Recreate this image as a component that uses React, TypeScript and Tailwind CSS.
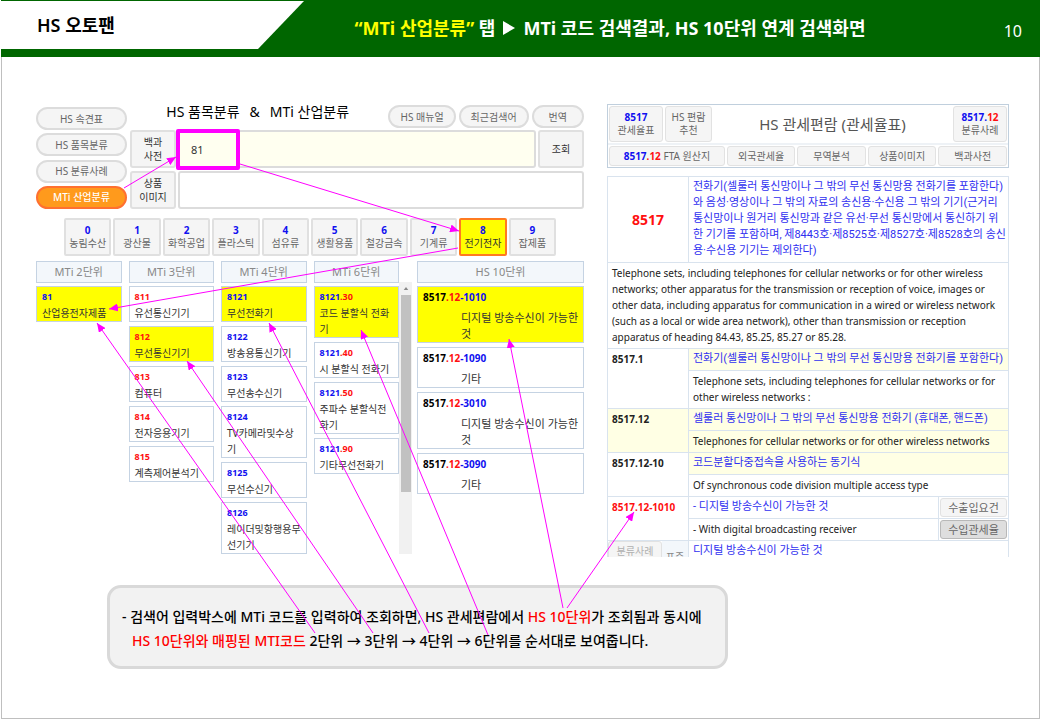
import type { ReactNode } from "react";

type Part = { text: string; tone: "blue" | "red" | "black" };
type Item = { code: Part[]; name: ReactNode; active?: boolean };

const toneClass = {
  blue: "text-[#1010f0]",
  red: "text-[#ff1010]",
  black: "text-black",
};

const blue = (text: string): Part[] => [{ text, tone: "blue" }];
const red = (text: string): Part[] => [{ text, tone: "red" }];
const six = (tail: string): Part[] => [
  { text: "8121", tone: "blue" },
  { text: tail, tone: "red" },
];
const ten = (tail: string): Part[] => [
  { text: "8517", tone: "black" },
  { text: ".12", tone: "red" },
  { text: tail, tone: "blue" },
];

const categories = [
  "농림수산",
  "광산물",
  "화학공업",
  "플라스틱",
  "섬유류",
  "생활용품",
  "철강금속",
  "기계류",
  "전기전자",
  "잡제품",
];

const mtiColumns: { title: string; items: Item[] }[] = [
  {
    title: "MTi 2단위",
    items: [{ code: blue("81"), name: "산업용전자제품", active: true }],
  },
  {
    title: "MTi 3단위",
    items: [
      { code: red("811"), name: "유선통신기기" },
      { code: red("812"), name: "무선통신기기", active: true },
      { code: red("813"), name: "컴퓨터" },
      { code: red("814"), name: "전자응용기기" },
      { code: red("815"), name: "계측제어분석기" },
    ],
  },
  {
    title: "MTi 4단위",
    items: [
      { code: blue("8121"), name: "무선전화기", active: true },
      { code: blue("8122"), name: "방송용통신기기" },
      { code: blue("8123"), name: "무선송수신기" },
      { code: blue("8124"), name: <>TV카메라및수상<br />기</> },
      { code: blue("8125"), name: "무선수신기" },
      { code: blue("8126"), name: <>레이더및항행용무<br />선기기</> },
    ],
  },
  {
    title: "MTi 6단위",
    items: [
      { code: six(".30"), name: <>코드 분할식 전화<br />기</>, active: true },
      { code: six(".40"), name: "시 분할식 전화기" },
      { code: six(".50"), name: <>주파수 분할식전<br />화기</> },
      { code: six(".90"), name: "기타무선전화기" },
    ],
  },
];

const hsItems: Item[] = [
  { code: ten("-1010"), name: <>디지털 방송수신이 가능한<br />것</>, active: true },
  { code: ten("-1090"), name: "기타" },
  { code: ten("-3010"), name: <>디지털 방송수신이 가능한<br />것</> },
  { code: ten("-3090"), name: "기타" },
];

const arrows = [
  [124, 188, 176, 157],
  [240, 164, 459, 231],
  [458, 248, 109, 309],
  [315, 633, 97, 323],
  [373, 633, 187, 361],
  [429, 633, 269, 323],
  [488, 635, 361, 330],
  [563, 608, 509, 339],
  [567, 608, 634, 512],
];

function Code({ parts }: { parts: Part[] }) {
  return (
    <>
      {parts.map((p) => (
        <span key={p.text} className={toneClass[p.tone]}>
          {p.text}
        </span>
      ))}
    </>
  );
}

function Pill({ children, active }: { children: ReactNode; active?: boolean }) {
  return (
    <button
      type="button"
      className={`h-[23px] whitespace-nowrap rounded-full border-2 px-[10px] text-[10px] leading-[18px] ${
        active
          ? "border-[#ff7030] bg-[#ff9a1c] font-medium text-white"
          : "border-[#dcdcdc] bg-[#f5f5f5] text-[#666]"
      }`}
    >
      {children}
    </button>
  );
}

function SquareButton({ children, className }: { children: ReactNode; className: string }) {
  return (
    <button
      type="button"
      className={`rounded-[3px] border border-[#e2e2e2] bg-[#f5f5f5] ${className}`}
    >
      {children}
    </button>
  );
}

function ColumnTitle({ children }: { children: ReactNode }) {
  return (
    <h3 className="h-[22px] whitespace-nowrap border border-[#c5d3e3] bg-[#f3f7fb] text-center text-[11px] leading-5 text-[#888]">
      {children}
    </h3>
  );
}

function Header() {
  return (
    <header className="flex h-[57px] items-start bg-[#006600] text-white">
      <div className="mt-px h-12 w-[303px] shrink-0 bg-white pl-9 [clip-path:polygon(0_0,100%_0,257px_100%,0_100%)]">
        <h1 className="text-[18px] font-semibold leading-[48px] text-black">HS 오토팬</h1>
      </div>
      <h2 className="flex flex-1 items-center justify-center gap-2 whitespace-nowrap text-[18px] font-bold leading-[56px]">
        <span>
          <span className="text-[#ffff00]">“MTi 산업분류”</span> 탭
        </span>
        <svg viewBox="0 0 12 14" className="h-[14px] w-3" fill="currentColor" aria-hidden="true">
          <path d="M0 0L12 7L0 14Z" />
        </svg>
        <span>MTi 코드 검색결과, HS 10단위 연계 검색화면</span>
      </h2>
      <span className="w-[124px] shrink-0 pr-[18px] text-right text-[16px] leading-[62px]">10</span>
    </header>
  );
}

function SearchArea() {
  return (
    <div className="flex gap-[3px]">
      <nav className="flex w-[91px] shrink-0 flex-col justify-between pt-[3px]">
        <Pill>HS 속견표</Pill>
        <Pill>HS 품목분류</Pill>
        <Pill>HS 분류사례</Pill>
        <Pill active>MTi 산업분류</Pill>
      </nav>
      <div className="min-w-0 flex-1">
        <div className="flex h-[26px] items-start gap-[3px] pt-px">
          <h2 className="flex flex-1 justify-center gap-[10px] text-[14px] leading-[14px] text-black">
            <span>HS 품목분류</span>
            <span>&amp;</span>
            <span>MTi 산업분류</span>
          </h2>
          <Pill>HS 매뉴얼</Pill>
          <Pill>최근검색어</Pill>
          <Pill>
            <span className="px-[5px]">번역</span>
          </Pill>
        </div>
        <div className="flex h-[38px] gap-[2px]">
          <label
            htmlFor="encyclopedia"
            className="flex w-[46px] items-center justify-center rounded-[3px] border-2 border-[#e0e0e0] bg-[#f5f5f5] text-center text-[10px] leading-[14px] text-[#333]"
          >
            백과
            <br />
            사전
          </label>
          <div className="relative min-w-0 flex-1">
            <input
              id="encyclopedia"
              defaultValue="81"
              className="h-full w-full rounded-[3px] border-2 border-[#dcdcdc] bg-[#fffff0] pl-[11px] text-[11px] text-[#333]"
            />
            <div className="pointer-events-none absolute -left-[2px] -top-px h-[41px] w-16 rounded-[2px] border-4 border-[#ff00ff]" />
          </div>
          <button
            type="button"
            className="w-[46px] rounded-[3px] border-2 border-[#e0e0e0] bg-[#f5f5f5] text-[10px] text-[#333]"
          >
            조회
          </button>
        </div>
        <div className="mt-[3px] flex h-[38px] gap-[2px]">
          <label
            htmlFor="image-search"
            className="flex w-[46px] items-center justify-center rounded-[3px] border-2 border-[#e0e0e0] bg-[#f5f5f5] text-center text-[10px] leading-[14px] text-[#333]"
          >
            상품
            <br />
            이미지
          </label>
          <input
            id="image-search"
            className="min-w-0 flex-1 rounded-[3px] border-2 border-[#dcdcdc] bg-white px-3 text-[11px]"
          />
        </div>
      </div>
    </div>
  );
}

function CategoryTabs() {
  return (
    <div className="mt-[9px] flex h-[38px] gap-[2px] px-7">
      {categories.map((name, i) => (
        <button
          key={name}
          type="button"
          className={`min-w-0 flex-1 whitespace-nowrap rounded-[2px] border-2 text-[10px] leading-[13px] ${
            i === 8
              ? "border-[#ff7a20] bg-[#ffff00] text-[#333]"
              : "border-[#e0e0e0] bg-[#f5f5f5] text-[#666]"
          }`}
        >
          <span className="block font-bold text-[#1010f0]">{i}</span>
          {name}
        </button>
      ))}
    </div>
  );
}

function Results() {
  return (
    <div className="mt-[5px] flex">
      <div className="grid flex-[363] grid-cols-4 gap-[7px]">
        {mtiColumns.map((col) => (
          <section key={col.title} className="min-w-0">
            <ColumnTitle>{col.title}</ColumnTitle>
            <ul className="mt-[3px] flex flex-col gap-1">
              {col.items.map((item, i) => (
                <li
                  key={i}
                  className={`whitespace-nowrap border border-[#c5d3e3] px-[5px] pt-[2px] text-[10px] leading-4 text-[#333] ${
                    item.active ? "bg-[#ffff00]" : "bg-white"
                  }`}
                >
                  <div className="text-[9px] font-bold leading-4">
                    <Code parts={item.code} />
                  </div>
                  {item.name}
                </li>
              ))}
            </ul>
          </section>
        ))}
      </div>
      <div className="mr-[5px] mt-[21px] flex w-[13px] shrink-0 flex-col items-center bg-[#f1f1f1]">
        <svg viewBox="0 0 6 4" className="my-[5px] h-[3px] w-[6px]" fill="#888" aria-hidden="true">
          <path d="M0 4L3 0L6 4Z" />
        </svg>
        <div className="h-[197px] w-[10px] bg-[#c1c1c1]" />
      </div>
      <section className="min-w-0 flex-[167]">
        <ColumnTitle>HS 10단위</ColumnTitle>
        <ul className="mt-[3px] flex flex-col gap-1">
          {hsItems.map((item, i) => (
            <li
              key={i}
              className={`whitespace-nowrap border border-[#c5d3e3] pl-[5px] pt-[2px] text-[11px] leading-4 text-[#333] ${
                item.active ? "bg-[#ffff00]" : "bg-white"
              }`}
            >
              <div className="text-[10px] font-bold leading-4">
                <Code parts={item.code} />
              </div>
              <div className="mt-[5px] pl-[38px]">{item.name}</div>
            </li>
          ))}
        </ul>
      </section>
    </div>
  );
}

function TariffHeader() {
  return (
    <div className="border border-[#c0cfdd] text-[10px] text-[#666]">
      <div className="flex h-10 items-stretch gap-[2px] border-b-2 border-[#eef2f6] p-px">
        <SquareButton className="w-[54px] leading-[13px]">
          <b className="block text-[#1010f0]">8517</b>
          관세율표
        </SquareButton>
        <SquareButton className="w-[47px] leading-[13px]">
          HS 편람
          <br />
          추천
        </SquareButton>
        <h2 className="flex-1 self-center text-center text-[15px] text-[#555]">HS 관세편람 (관세율표)</h2>
        <SquareButton className="w-[54px] leading-[13px]">
          <b className="block text-[#1010f0]">
            8517.<span className="text-[#ff1010]">12</span>
          </b>
          분류사례
        </SquareButton>
      </div>
      <div className="flex h-[22px] gap-[2px] whitespace-nowrap p-px">
        <SquareButton className="flex-[118]">
          <b className="text-[#1010f0]">
            8517<span className="text-[#ff1010]">.12</span>
          </b>{" "}
          FTA 원산지
        </SquareButton>
        <SquareButton className="flex-[69]">외국관세율</SquareButton>
        <SquareButton className="flex-[69]">무역분석</SquareButton>
        <SquareButton className="flex-[69]">상품이미지</SquareButton>
        <SquareButton className="flex-[69]">백과사전</SquareButton>
      </div>
    </div>
  );
}

const cell = "border border-[#d9e3ee] pl-1 pb-[3px] pt-[2px] align-top";
const ko = "text-[11px] text-[#3030f0] font-[Roboto,'Noto_Sans_CJK_KR',sans-serif]";

function TariffTable() {
  return (
    <div className="mt-2 h-[381px] overflow-hidden">
      <table className="w-full table-fixed border-collapse border border-[#c0cfdd] text-[10px] leading-4 text-[#222]">
        <colgroup>
          <col className="w-[81px]" />
          <col />
          <col className="w-[70px]" />
        </colgroup>
        <tbody>
          <tr>
            <th scope="row" className="border border-[#d9e3ee] text-[14px] font-bold text-[#ff1010]">
              8517
            </th>
            <td colSpan={2} className={`${cell} ${ko} whitespace-nowrap`}>
              전화기(셀룰러 통신망이나 그 밖의 무선 통신망용 전화기를 포함한다)
              <br />와 음성·영상이나 그 밖의 자료의 송신용·수신용 그 밖의 기기(근거리
              <br />
              통신망이나 원거리 통신망과 같은 유선·무선 통신망에서 통신하기 위
              <br />한 기기를 포함하며, 제8443호·제8525호·제8527호·제8528호의 송신
              <br />
              용·수신용 기기는 제외한다)
            </td>
          </tr>
          <tr>
            <td colSpan={3} className={`${cell} whitespace-nowrap`}>
              Telephone sets, including telephones for cellular networks or for other wireless
              <br />
              networks; other apparatus for the transmission or reception of voice, images or
              <br />
              other data, including apparatus for communication in a wired or wireless network
              <br />
              (such as a local or wide area network), other than transmission or reception
              <br />
              apparatus of heading 84.43, 85.25, 85.27 or 85.28.
            </td>
          </tr>
          <tr>
            <th scope="row" rowSpan={2} className={`${cell} text-left font-bold`}>
              8517.1
            </th>
            <td colSpan={2} className={`${cell} ${ko} whitespace-nowrap bg-[#ffffe4]`}>
              전화기(셀룰러 통신망이나 그 밖의 무선 통신망용 전화기를 포함한다)
            </td>
          </tr>
          <tr>
            <td colSpan={2} className={`${cell} whitespace-nowrap`}>
              Telephone sets, including telephones for cellular networks or for
              <br />
              other wireless networks :
            </td>
          </tr>
          <tr className="bg-[#ffffe4]">
            <th scope="row" rowSpan={2} className={`${cell} text-left font-bold`}>
              8517.12
            </th>
            <td colSpan={2} className={`${cell} ${ko} whitespace-nowrap`}>
              셀룰러 통신망이나 그 밖의 무선 통신망용 전화기 (휴대폰, 핸드폰)
            </td>
          </tr>
          <tr className="bg-[#ffffe4]">
            <td colSpan={2} className={`${cell} whitespace-nowrap`}>
              Telephones for cellular networks or for other wireless networks
            </td>
          </tr>
          <tr>
            <th scope="row" rowSpan={2} className={`${cell} text-left font-bold`}>
              8517.12-10
            </th>
            <td colSpan={2} className={`${cell} ${ko} bg-[#ffffe4]`}>
              코드분할다중접속을 사용하는 동기식
            </td>
          </tr>
          <tr>
            <td colSpan={2} className={cell}>
              Of synchronous code division multiple access type
            </td>
          </tr>
          <tr>
            <th scope="row" rowSpan={2} className={`${cell} text-left font-bold text-[#ff1010]`}>
              8517.12-1010
            </th>
            <td className={`${cell} ${ko}`}>- 디지털 방송수신이 가능한 것</td>
            <td className="border border-[#d9e3ee] p-px">
              <SquareButton className="block h-[19px] w-full text-[11px] leading-4 text-[#666]">
                수출입요건
              </SquareButton>
            </td>
          </tr>
          <tr>
            <td className={cell}>- With digital broadcasting receiver</td>
            <td className="border border-[#d9e3ee] p-px">
              <button
                type="button"
                className="block h-[19px] w-full rounded-[3px] border border-[#b8b8b8] bg-[#dedede] text-[11px] leading-4 text-[#666]"
              >
                수입관세율
              </button>
            </td>
          </tr>
          <tr>
            <td className="border border-[#d9e3ee] p-0">
              <div className="flex items-start">
                <SquareButton className="h-5 w-[54px] shrink-0 text-[#b0b0b0]">분류사례</SquareButton>
                <span className="flex-1 bg-[#f3f7fb] pt-[8px] text-center text-[#888]">표준</span>
              </div>
            </td>
            <td colSpan={2} className={`${cell} ${ko}`}>
              디지털 방송수신이 가능한 것
            </td>
          </tr>
        </tbody>
      </table>
    </div>
  );
}

function Note() {
  return (
    <p className="ml-[71px] mt-7 w-[621px] whitespace-nowrap rounded-[14px] border-[3px] border-[#d9d9d9] bg-[#f2f2f2] px-3 pb-[13px] pt-[17px] text-[14px] font-medium leading-6 text-black">
      <span className="block">
        - 검색어 입력박스에 MTi 코드를 입력하여 조회하면, HS 관세편람에서{" "}
        <span className="text-[#ff0000]">HS 10단위</span>가 조회됨과 동시에
      </span>
      <span className="block pl-[10px]">
        <span className="text-[#ff0000]">HS 10단위와 매핑된 MTI코드</span> 2단위 → 3단위 → 4단위 → 6단위를
        순서대로 보여줍니다.
      </span>
    </p>
  );
}

function Arrows() {
  return (
    <svg
      viewBox="0 0 1040 720"
      preserveAspectRatio="none"
      className="pointer-events-none absolute inset-0 h-full w-full"
      aria-hidden="true"
    >
      <defs>
        <marker
          id="head"
          markerUnits="userSpaceOnUse"
          markerWidth="9"
          markerHeight="8"
          refX="9"
          refY="4"
          orient="auto"
        >
          <path d="M0 0L9 4L0 8Z" fill="#ff00ff" />
        </marker>
      </defs>
      {arrows.map(([x1, y1, x2, y2]) => (
        <line
          key={`${x1}-${x2}`}
          x1={x1}
          y1={y1}
          x2={x2}
          y2={y2}
          stroke="#ff00ff"
          strokeWidth="1"
          markerEnd="url(#head)"
        />
      ))}
    </svg>
  );
}

export default function App() {
  return (
    <div className="relative flex min-h-screen flex-col bg-white pb-px pl-px font-['Noto_Sans','Noto_Sans_CJK_KR',sans-serif]">
      <Header />
      <main className="flex-1 border-x border-b border-[#bfbfbf] pl-[34px] pr-[30px] pt-[47px]">
        <div className="flex gap-[23px]">
          <div className="min-w-0 flex-[548]">
            <SearchArea />
            <CategoryTabs />
            <Results />
          </div>
          <div className="min-w-0 flex-[402]">
            <TariffHeader />
            <TariffTable />
          </div>
        </div>
        <Note />
      </main>
      <Arrows />
    </div>
  );
}
